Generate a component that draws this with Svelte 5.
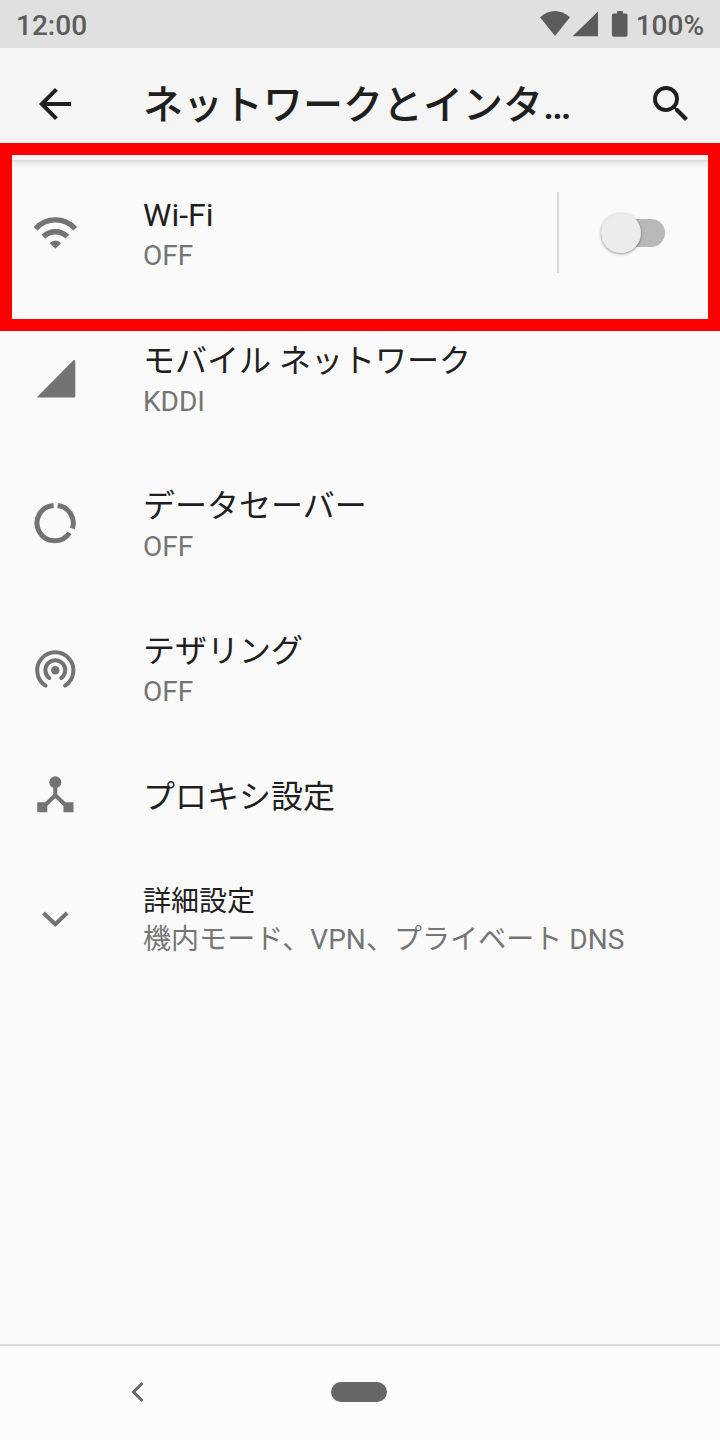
<script>
  let wifiOn = false;

  const items = [
    { icon: "mobile", title: "モバイル ネットワーク", summary: "KDDI" },
    { icon: "data", title: "データセーバー", summary: "OFF" },
    { icon: "tether", title: "テザリング", summary: "OFF" },
  ];
</script>

<div class="screen">
  <div class="status">
    <span class="clock">12:00</span>
    <svg class="status-icons" width="92" height="48" viewBox="0 0 92 48">
      <path d="M0 17.2Q15 5 30 17.2L15 36z" />
      <path d="M58 11.5V36.3H32.6z" />
      <path
        d="M77 11h6v2.4h3q1.5 0 1.5 1.5v20.2q0 1.6-1.6 1.6H73.5q-1.6 0-1.6-1.6V14.9q0-1.5 1.5-1.5H77z"
      />
    </svg>
    <span class="battery">100%</span>
  </div>

  <header>
    <svg width="48" height="48" viewBox="0 0 24 24">
      <path d="M20 11H7.83l5.59-5.59L12 4l-8 8 8 8 1.41-1.41L7.83 13H20v-2z" />
    </svg>
    <h1>ネットワークとインタ…</h1>
    <svg width="48" height="48" viewBox="0 0 24 24">
      <path
        d="M15.5 14h-.79l-.28-.27A6.471 6.471 0 0 0 16 9.5 6.5 6.5 0 1 0 9.5 16c1.61 0 3.09-.59 4.23-1.57l.27.28v.79l5 4.99L20.49 19l-4.99-5zm-6 0C7.01 14 5 11.99 5 9.5S7.01 5 9.5 5 14 7.01 14 9.5 11.99 14 9.5 14z"
      />
    </svg>
  </header>

  <main>
    <div class="item wifi">
      <svg class="icon" width="48" height="48" viewBox="0 0 48 48">
        <path class="line" stroke-width="5.4" d="M3.7 19.7A26.5 26.5 0 0 1 43.1 19.7" />
        <path class="line" stroke-width="5.4" d="M11.5 27.6A17 17 0 0 1 35.3 27.6" />
        <path d="M17.7 33.9Q23.4 28.9 29.1 33.9L23.4 39.7z" />
      </svg>
      <div class="text">
        <p class="title">Wi-Fi</p>
        <p class="summary">{wifiOn ? "ON" : "OFF"}</p>
      </div>
      <div class="divider"></div>
      <button
        class="switch"
        class:on={wifiOn}
        aria-label="Wi-Fi"
        on:click={() => (wifiOn = !wifiOn)}
      >
        <span class="thumb"></span>
      </button>
      <div class="highlight"></div>
    </div>

    {#each items as item}
      <div class="item">
        <svg class="icon" width="48" height="48" viewBox="0 0 48 48">
          {#if item.icon === "mobile"}
            <path d="M43.3 7.5V42.3q0 1.3-1.3 1.3H6.5q-2 0-.7-1.4L41.5 6.300q1.800-1.200 1.800 1.200z" />
          {:else if item.icon === "data"}
            <path class="line" stroke-width="5" d="M25.6 6.4A17.7 17.7 0 0 1 40.4 29.400" />
            <path class="line" stroke-width="5" d="M37.5 33.8A17.7 17.7 0 1 1 21.6 6.4" />
          {:else}
            <circle cx="23.3" cy="25.3" r="4.2" />
            <path class="line round" stroke-width="4" d="M17.3 33A9.9 9.9 0 1 1 29.3 33" />
            <path class="line round" stroke-width="4" d="M13.5 40.6A18.1 18.1 0 1 1 33.1 40.6" />
          {/if}
        </svg>
        <div class="text">
          <p class="title">{item.title}</p>
          <p class="summary">{item.summary}</p>
        </div>
      </div>
    {/each}

    <div class="item single">
      <svg class="icon" width="48" height="48" viewBox="0 0 48 48">
        <circle cx="23.3" cy="11.2" r="6" />
        <path d="M5.3 31.2h10v10h-10zM31.5 31.2h10v10h-10z" />
        <path class="line" stroke-width="4" d="M23.3 14V24.2L12 35.2M23.3 24.2L34.6 35.2" />
      </svg>
      <div class="text">
        <p class="title">プロキシ設定</p>
      </div>
    </div>

    <div class="item advanced">
      <svg class="icon" width="48" height="48" viewBox="0 0 48 48">
        <path class="line" stroke-width="4" d="M11.5 18L23.3 29.3L35.1 18" />
      </svg>
      <div class="text">
        <p class="title">詳細設定</p>
        <p class="summary">機内モード、VPN、プライベート DNS</p>
      </div>
    </div>
  </main>

  <nav>
    <svg width="16" height="24" viewBox="0 0 16 24">
      <path d="M12.5 3L3.5 12L12.5 21" fill="none" stroke="#666" stroke-width="3" />
    </svg>
    <div class="home"></div>
  </nav>
</div>

<style>
  :global(body) {
    margin: 0;
  }

  .screen {
    display: flex;
    flex-direction: column;
    width: 720px;
    height: 1440px;
    background: #fafafa;
    color: #1f1f1f;
    font-family: Roboto, "Noto Sans CJK JP", sans-serif;
    overflow: hidden;
  }

  .status {
    position: relative;
    z-index: 1;
    display: flex;
    align-items: center;
    box-sizing: border-box;
    height: 48px;
    padding: 0 16px;
    background: #e0e0e0;
    color: #5c5c5c;
    font-size: 28px;
    font-weight: 500;
    line-height: 48px;
  }

  .clock {
    flex: 1;
  }

  .clock,
  .battery {
    padding-top: 3px;
  }

  .status-icons {
    margin-right: 4px;
    fill: #5c5c5c;
  }

  header {
    position: relative;
    display: flex;
    align-items: center;
    box-sizing: border-box;
    height: 112px;
    padding: 0 25px 0 31px;
    background: #f5f5f5;
    box-shadow: 0 1px 8px rgba(0, 0, 0, 0.2);
  }

  header svg {
    fill: #1f1f1f;
  }

  h1 {
    flex: 1;
    margin: 0 0 0 64px;
    padding-top: 3px;
    font-size: 40px;
    font-weight: 500;
    line-height: 48px;
    white-space: nowrap;
  }

  main {
    flex: 1;
  }

  .item {
    position: relative;
    display: flex;
    align-items: center;
    box-sizing: border-box;
    height: 145.4px;
    padding: 0 55px 0 32px;
  }

  .icon {
    flex: none;
    margin-right: 63px;
    fill: #737373;
  }

  .line {
    fill: none;
    stroke: #737373;
  }

  .round {
    stroke-linecap: round;
  }

  .text {
    flex: 1;
    padding-top: 4px;
  }

  p {
    margin: 0;
    white-space: nowrap;
  }

  .title {
    font-size: 32px;
    line-height: 42px;
  }

  .summary {
    color: #757575;
    font-size: 28px;
    line-height: 39px;
  }

  .single {
    height: 106px;
  }

  .advanced {
    height: 142px;
  }

  .advanced .title {
    font-size: 28px;
    line-height: 38px;
  }

  .advanced .summary {
    letter-spacing: 0.06px;
    line-height: 37px;
  }

  .divider {
    width: 2px;
    height: 81px;
    margin-right: 42px;
    background: #dadade;
  }

  .switch {
    display: flex;
    align-items: center;
    width: 64px;
    height: 28px;
    padding: 0;
    border: 0;
    border-radius: 14px;
    background: #b9b9b9;
  }

  .thumb {
    flex: none;
    width: 40px;
    height: 40px;
    border-radius: 50%;
    background: #ececec;
    box-shadow: 0 1px 3px rgba(0, 0, 0, 0.4);
  }

  .on .thumb {
    margin-left: 24px;
  }

  /* frame around the Wi-Fi row, slightly over the header */
  .highlight {
    position: absolute;
    inset: -17px 0 -26px;
    border: 12px solid #f00;
    pointer-events: none;
  }

  .wifi {
    z-index: 1;
  }

  nav {
    display: flex;
    align-items: center;
    box-sizing: border-box;
    height: 96px;
    padding: 0 0 2px 130px;
    border-top: 2px solid #dcdcdc;
    background: #fcfcfc;
  }

  .home {
    width: 56px;
    height: 20px;
    margin-left: 185px;
    border-radius: 10px;
    background: #666;
  }
</style>
